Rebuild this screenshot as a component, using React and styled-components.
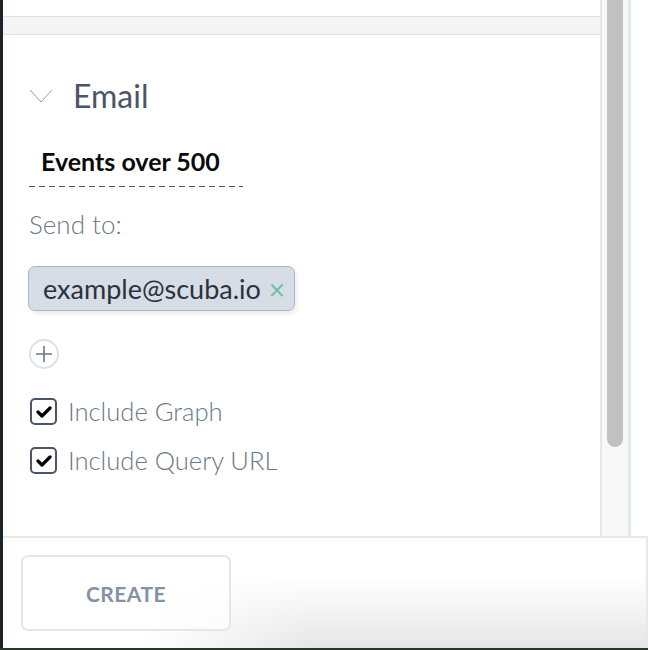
import React from 'react';
import styled, { createGlobalStyle } from 'styled-components';

const GlobalStyle = createGlobalStyle`
  html, body {
    margin: 0;
    padding: 0;
    background: #ffffff;
    overflow: hidden;
  }
  body {
    font-family: Lato, "Liberation Sans", sans-serif;
  }
`;

const Screen = styled.div`
  width: 648px;
  height: 650px;
  display: flex;
  flex-direction: column;
  background: #1b232d;
`;

const Window = styled.div`
  flex: 1;
  display: flex;
  flex-direction: column;
  margin-left: 3px;
  background: #ffffff;
  min-height: 0;
`;

const BottomStrip = styled.div`
  height: 2px;
  background: #2a372c;
`;

const Body = styled.div`
  height: 536px;
  display: flex;
`;

const Panel = styled.div`
  width: 597px;
  display: flex;
  flex-direction: column;
  border-right: 2px solid #e6e6e6;
`;

const TopStub = styled.div`
  height: 16px;
`;

const Band = styled.div`
  height: 17px;
  background: #f4f4f4;
  border-top: 1px solid #e1e1e1;
  border-bottom: 1px solid #e1e1e1;
`;

const Section = styled.div`
  padding: 43px 0 0 26px;
  display: flex;
  flex-direction: column;
  align-items: flex-start;
`;

const Header = styled.div`
  display: flex;
  align-items: center;
  gap: 20px;
  height: 36px;
`;

const Title = styled.span`
  font-size: 32px;
  font-weight: 400;
  line-height: 36px;
  color: #4b5568;
`;

const NameField = styled.div`
  margin-top: 33px;
  width: 202px;
  padding: 0 0 12px 12px;
  font-size: 25px;
  font-weight: 700;
  line-height: 28px;
  color: #0b0b0b;
  background-image: repeating-linear-gradient(to right, #4b5568 0 6px, transparent 6px 10px);
  background-size: 100% 1.5px;
  background-repeat: no-repeat;
  background-position: bottom left;
`;

const Label = styled.div`
  margin-top: 22px;
  font-size: 26px;
  font-weight: 300;
  line-height: 30px;
  color: #6b778a;
`;

const Tag = styled.div`
  margin: 27px 0 0 -1px;
  display: flex;
  align-items: center;
  gap: 8px;
  height: 43px;
  padding: 0 9px 0 14px;
  background: #d6dde7;
  border: 1px solid #a9b6c8;
  border-radius: 7px;
  box-shadow: 2px 3px 4px rgba(0, 0, 0, 0.08);
  font-size: 27px;
  color: #2b323d;
`;

const Remove = styled.span`
  color: #6cbf9f;
  font-size: 28px;
  line-height: 1;
`;

const AddButton = styled.div`
  margin-top: 28px;
  width: 26px;
  height: 26px;
  border: 2px solid #dde1e8;
  border-radius: 50%;
  display: flex;
  align-items: center;
  justify-content: center;
`;

const Checks = styled.div`
  margin-top: 29px;
  display: flex;
  flex-direction: column;
  gap: 22px;
`;

const CheckRow = styled.label`
  display: flex;
  align-items: center;
  gap: 11px;
  padding-left: 1px;
  font-size: 25.6px;
  font-weight: 300;
  line-height: 27px;
  color: #6b778a;
`;

const Box = styled.span`
  width: 23px;
  height: 23px;
  border: 2px solid #4b5568;
  border-radius: 5px;
  display: flex;
  align-items: center;
  justify-content: center;
`;

const Scrollbar = styled.div`
  width: 26px;
  background: #f8f8f8;
  border-right: 3px solid #e6e9ec;
  display: flex;
  justify-content: center;
`;

const Thumb = styled.div`
  width: 16px;
  height: 447px;
  background: #c1c1c1;
  border-radius: 0 0 8px 8px;
`;

const Footer = styled.div`
  flex: 1;
  display: flex;
  border-top: 2px solid #e6e9ec;
`;

const FooterMain = styled.div`
  width: 626px;
  border-right: 2px solid #e6e9ec;
  padding: 17px 0 0 18px;
  background:
    linear-gradient(to right, #ffffff 22%, rgba(255, 255, 255, 0) 48%),
    linear-gradient(to bottom, rgba(255, 255, 255, 0) 35%, #e6e6e6 100%);
`;

const CreateButton = styled.button`
  width: 210px;
  height: 76px;
  border: 2px solid #e3e7ec;
  border-radius: 7px;
  background: rgba(255, 255, 255, 0.6);
  font-family: Lato, "Liberation Sans", sans-serif;
  font-size: 21px;
  font-weight: 700;
  color: #8591a5;
  letter-spacing: 0.5px;
`;

const Chevron = () => (
  <svg width="24" height="14" viewBox="0 0 24 14">
    <polyline points="1,1 12,13 23,1" fill="none" stroke="#949daf" strokeWidth="1" />
  </svg>
);

const Plus = () => (
  <svg width="18" height="18" viewBox="0 0 18 18">
    <path d="M9 1v16M1 9h16" stroke="#6b778a" strokeWidth="1.6" />
  </svg>
);

const Check = () => (
  <svg width="16" height="14" viewBox="0 0 16 14">
    <polyline points="2,7 6,11 14,3" fill="none" stroke="#000" strokeWidth="3.2" strokeLinecap="round" strokeLinejoin="round" />
  </svg>
);

const options = ['Include Graph', 'Include Query URL'];

export default function App() {
  return (
    <>
      <GlobalStyle />
      <Screen>
        <Window>
          <Body>
            <Panel>
              <TopStub />
              <Band />
              <Section>
                <Header>
                  <Chevron />
                  <Title>Email</Title>
                </Header>
                <NameField>Events over 500</NameField>
                <Label>Send to:</Label>
                <Tag>
                  example@scuba.io
                  <Remove>×</Remove>
                </Tag>
                <AddButton>
                  <Plus />
                </AddButton>
                <Checks>
                  {options.map(o => (
                    <CheckRow key={o}>
                      <Box><Check /></Box>
                      {o}
                    </CheckRow>
                  ))}
                </Checks>
              </Section>
            </Panel>
            <Scrollbar>
              <Thumb />
            </Scrollbar>
          </Body>
          <Footer>
            <FooterMain>
              <CreateButton>CREATE</CreateButton>
            </FooterMain>
          </Footer>
        </Window>
        <BottomStrip />
      </Screen>
    </>
  );
}
